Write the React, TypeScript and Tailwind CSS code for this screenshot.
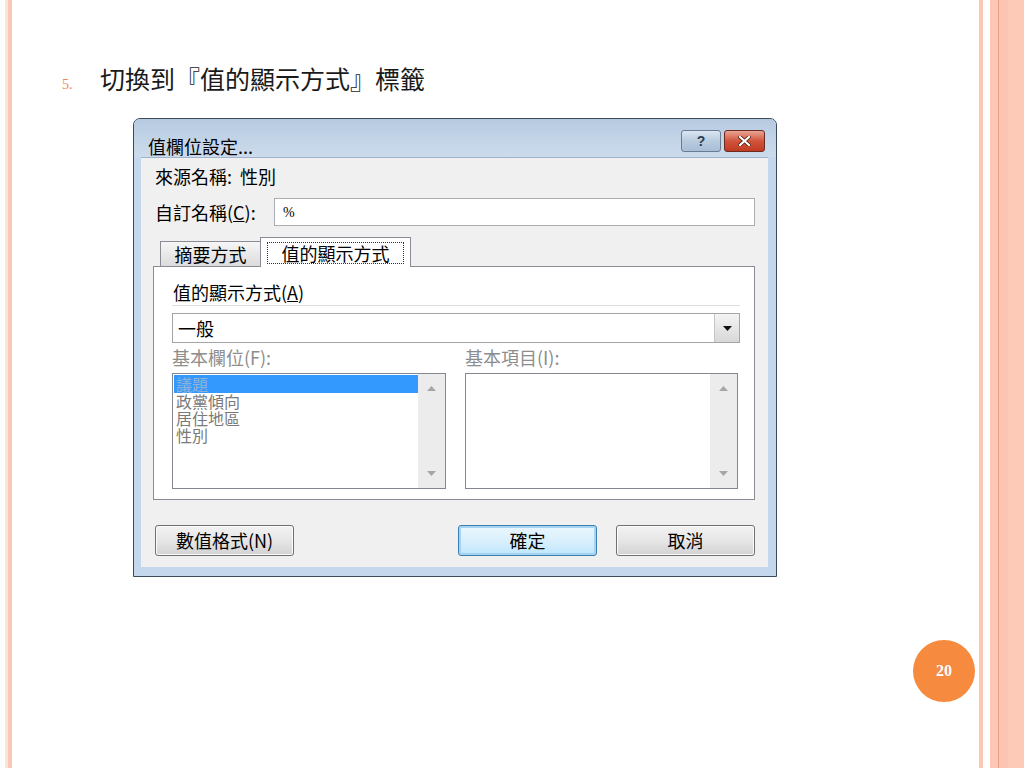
import React from 'react';

const CJK = '"Noto Sans CJK TC", "Noto Sans", sans-serif';

const TriUp = () => (
  <svg width="9" height="5" viewBox="0 0 9 5">
    <path d="M0 5 L4.5 0 L9 5 Z" fill="#a6a6a6" />
  </svg>
);

const TriDown = ({ color = '#a6a6a6' }: { color?: string }) => (
  <svg width="9" height="5" viewBox="0 0 9 5">
    <path d="M0 0 L9 0 L4.5 5 Z" fill={color} />
  </svg>
);

const ListBox = ({ items }: { items: { label: string; selected?: boolean }[] }) => (
  <div className="flex h-[116px] border border-[#828790] bg-white">
    <div className="flex-1 flex flex-col pt-[1px] pl-[1px]">
      {items.map((it) => (
        <div
          key={it.label}
          className={`leading-[17px] text-[16px] pl-[2px] ${
            it.selected ? 'bg-[#3399ff] text-[#8fb2d8] h-[18px] leading-[18px]' : 'h-[17px] text-[#7a7a7a]'
          }`}
        >
          {it.label}
        </div>
      ))}
    </div>
    <div className="w-[27px] bg-[#ececec] flex flex-col items-center justify-between pt-[12px] pb-[12px]">
      <TriUp />
      <TriDown />
    </div>
  </div>
);

const DlgButton = ({ label, primary }: { label: string; primary?: boolean }) => (
  <div
    className={`w-[139px] h-[31px] rounded-[3px] border flex items-center justify-center text-[18px] text-black ${
      primary
        ? 'border-[#3c7fb1] shadow-[inset_0_0_0_2px_#a6d3ef] bg-gradient-to-b from-[#eaf6fd] via-[#d9f0fc] to-[#bee6fd]'
        : 'border-[#707070] shadow-[inset_0_0_0_1px_#fbfbfb] bg-gradient-to-b from-[#f2f2f2] via-[#e6e6e6] to-[#d2d2d2]'
    }`}
  >
    {label}
  </div>
);

export default function App() {
  return (
    <div className="w-[1024px] h-[768px] bg-white flex relative overflow-hidden" style={{ fontFamily: CJK }}>
      {/* left slide rule */}
      <div className="w-[5px]" />
      <div className="w-[3px] bg-[#f8e6d9]" />
      <div className="w-[4px] bg-[#fcc6b5]" />

      <main className="flex-1 flex flex-col pt-[63px] pl-[50px]">
        <div className="flex items-baseline h-[30px]">
          <span className="w-[38px] text-[14px] text-[#e8875a]" style={{ fontFamily: '"Liberation Serif", serif' }}>
            5.
          </span>
          <span className="text-[25px] leading-[30px] text-[#1a1a1a]">切換到『值的顯示方式』標籤</span>
        </div>

        {/* dialog window */}
        <div className="mt-[25px] ml-[71px] w-[644px] h-[459px] flex flex-col border border-[#3b4b5c] rounded-t-[7px] bg-[#c4d7ed] pb-[9px]">
          <div className="h-[38px] flex items-start bg-gradient-to-b from-[#b6cae1] to-[#cddcec] rounded-t-[6px] pl-[14px] pr-[11px]">
            <span className="mt-[18px] text-[18px] leading-[18px] text-black">值欄位設定...</span>
            <div className="ml-auto mt-[11px] flex gap-[3px]">
              <div className="w-[40px] h-[22px] rounded-[3px] border border-[#6b7c91] bg-gradient-to-b from-[#dbe6f1] via-[#b9cbde] to-[#a8bfd7] flex items-center justify-center">
                <span className="text-[14px] leading-none font-bold text-[#2c3e56]" style={{ fontFamily: '"Liberation Sans", sans-serif' }}>
                  ?
                </span>
              </div>
              <div className="w-[41px] h-[22px] rounded-[3px] border border-[#6c2a1e] bg-gradient-to-b from-[#e8a393] via-[#d0533c] to-[#c23a22] flex items-center justify-center">
                <svg width="13" height="10" viewBox="0 0 13 10">
                  <path d="M2 1 L11 9 M11 1 L2 9" stroke="#4a1a10" strokeWidth="3.6" strokeLinecap="square" />
                  <path d="M2 1 L11 9 M11 1 L2 9" stroke="#ffffff" strokeWidth="2.2" strokeLinecap="square" />
                </svg>
              </div>
            </div>
          </div>

          <div className="flex-1 ml-[7px] mr-[8px] bg-[#f0f0f0] border-t border-[#9fb4cc] flex flex-col pl-[12px] pr-[13px] pt-[7px] pb-[11px] text-[18px] text-black">
            <div className="h-[22px] leading-[22px] pl-[2px]">
              來源名稱:&nbsp;&nbsp;性別
            </div>
            <div className="mt-[11px] flex items-center h-[28px]">
              <span className="w-[121px] pl-[2px] leading-[22px]">
                自訂名稱(<span className="underline">C</span>):
              </span>
              <div className="flex-1 h-[28px] bg-white border border-[#abadb3] flex items-center pl-[8px]">
                <span className="text-[14px]" style={{ fontFamily: '"Liberation Serif", serif' }}>%</span>
              </div>
            </div>

            {/* tabs */}
            <div className="mt-[12px] flex items-end h-[28px] pl-[7px] pr-[2px] relative z-10">
              <div className="w-[101px] h-[25px] border border-b-0 border-[#898c95] bg-gradient-to-b from-[#f6f6f6] to-[#dcdcdc] flex items-center justify-center leading-[22px]">
                摘要方式
              </div>
              <div className="w-[151px] h-[30px] -ml-[1px] -mb-[1px] border border-b-0 border-[#898c95] bg-white flex items-start justify-center pt-[4px]">
                <div className="w-[137px] h-[22px] border border-dotted border-[#333] flex items-center justify-center leading-[20px]">
                  值的顯示方式
                </div>
              </div>
            </div>

            <div className="h-[234px] border border-[#898c95] bg-white flex flex-col pl-[18px] pr-[14px] pt-[14px]">
              <div className="h-[22px] leading-[22px] pl-[1px]">
                值的顯示方式(<span className="underline">A</span>)
              </div>
              <div className="mt-[2px] h-[1px] bg-[#dcdcdc]" />
              <div className="mt-[7px] h-[30px] border border-[#a5a5a5] bg-white flex items-center">
                <span className="pl-[5px] flex-1 leading-[22px]">一般</span>
                <div className="w-[25px] h-[28px] border-l border-[#c6c6c6] bg-gradient-to-b from-[#f4f4f4] to-[#d8d8d8] flex items-center justify-center">
                  <TriDown color="#111" />
                </div>
              </div>
              <div className="mt-[3px] h-[22px] flex leading-[22px] text-[#8d8d8d]">
                <span className="w-[293px]">基本欄位(F):</span>
                <span>基本項目(I):</span>
              </div>
              <div className="mt-[5px] grid grid-cols-[274px_273px] gap-[19px]">
                <ListBox
                  items={[
                    { label: '議題', selected: true },
                    { label: '政黨傾向' },
                    { label: '居住地區' },
                    { label: '性別' },
                  ]}
                />
                <ListBox items={[]} />
              </div>
            </div>

            <div className="mt-[25px] flex items-center pl-[2px]">
              <DlgButton label="數值格式(N)" />
              <div className="flex-1" />
              <DlgButton label="確定" primary />
              <div className="w-[19px]" />
              <DlgButton label="取消" />
            </div>
          </div>
        </div>
      </main>

      {/* right slide rules */}
      <div className="w-[4px] bg-[#fcc7b6]" />
      <div className="w-[7px]" />
      <div className="w-[8px] bg-[#fdc7b6]" />
      <div className="w-[1px] bg-[#e7a184]" />
      <div className="w-[9px] bg-[#fcc5b3]" />
      <div className="w-[16px] bg-[#fdcab7]" />

      {/* page number badge */}
      <div className="absolute left-[913px] top-[640px] w-[62px] h-[62px] rounded-full bg-[#f68a3e] flex items-center justify-center">
        <span className="text-white font-bold text-[16px]" style={{ fontFamily: '"Liberation Serif", serif' }}>
          20
        </span>
      </div>
    </div>
  );
}
